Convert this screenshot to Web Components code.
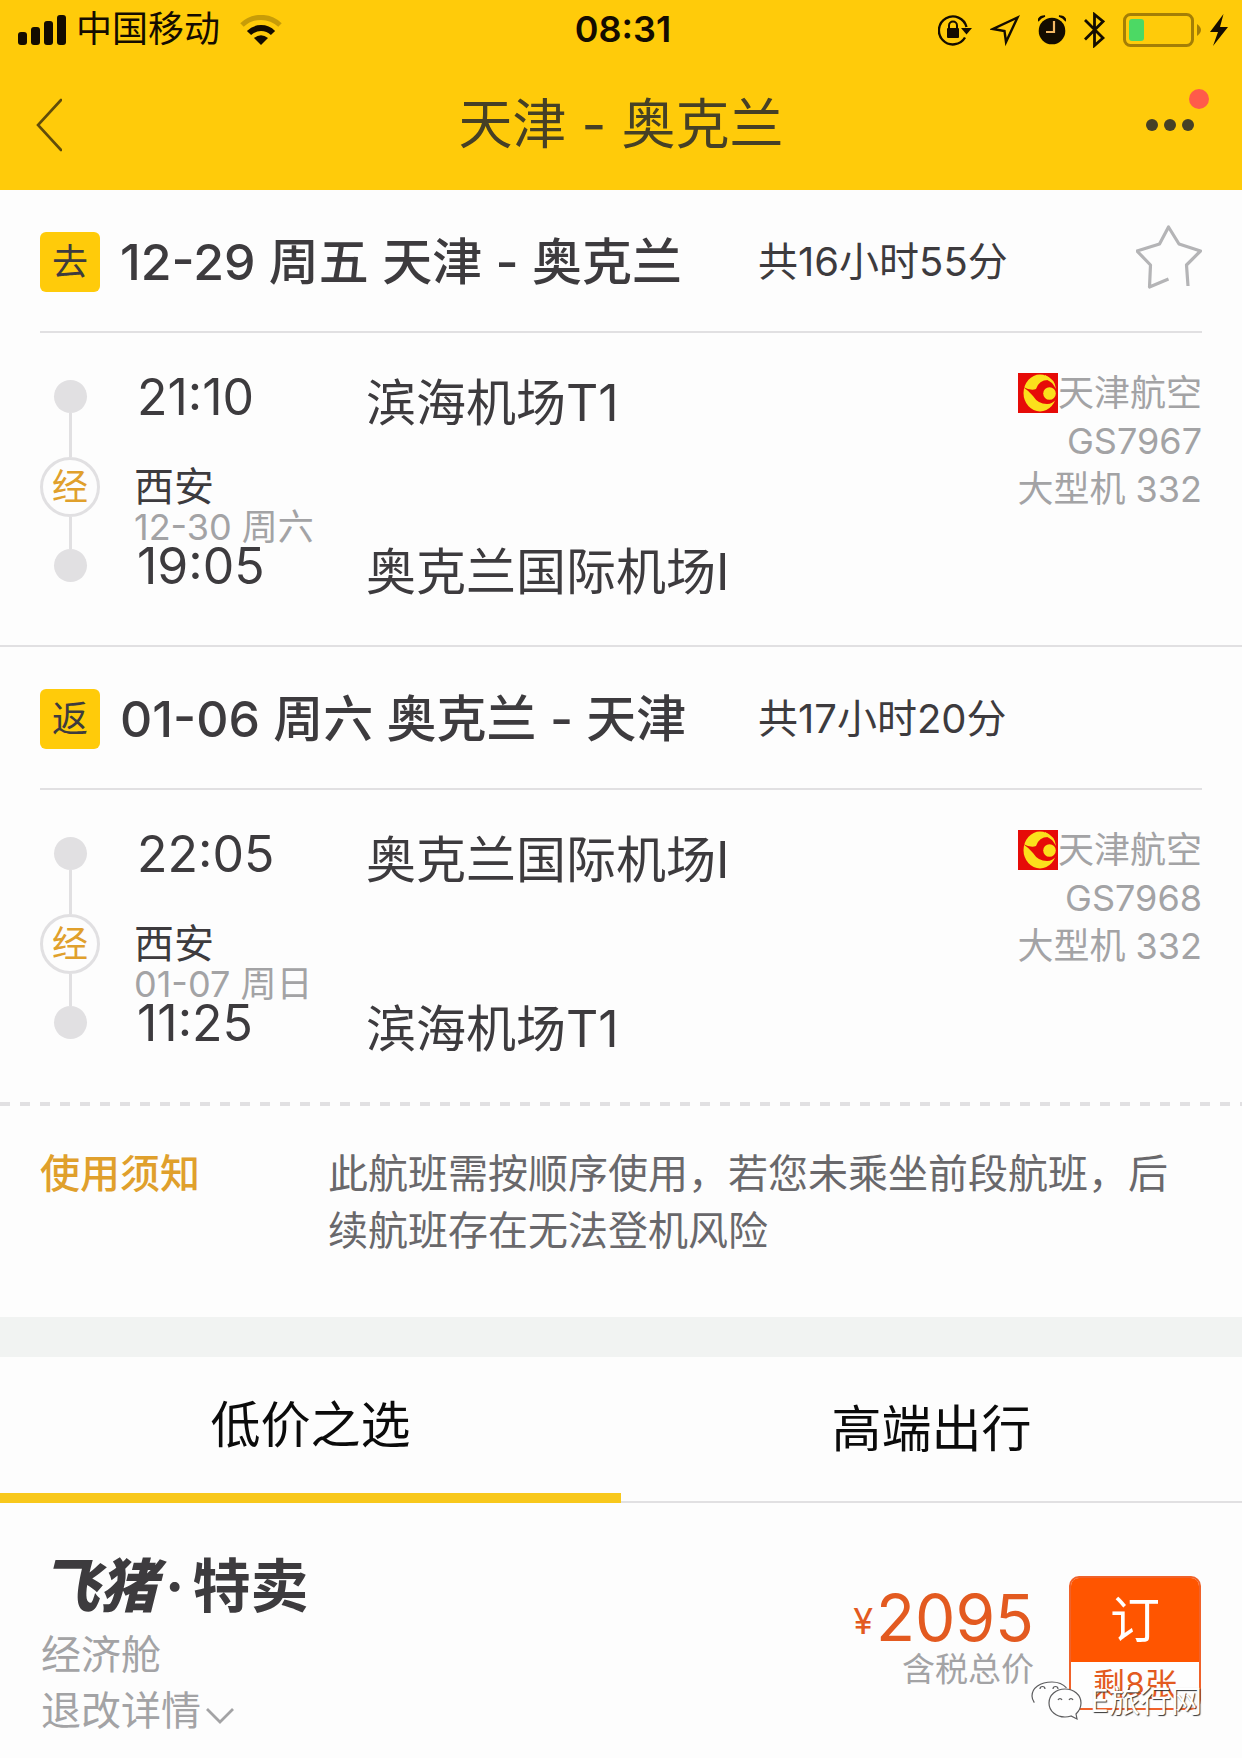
<!DOCTYPE html>
<html lang="zh-CN">
<head>
<meta charset="utf-8">
<meta name="viewport" content="width=device-width, initial-scale=1">
<title>天津 - 奥克兰</title>
<style>
    body {
        margin: 0;
        background: #fdfdfd;
        color: #3d3b3e;
        font-family: Inter, "Noto Sans CJK SC", sans-serif;
        font-size: 40px;
        line-height: 1.2;
        --yellow: #ffcb0a;
        --orange: #ff5500;
        --amber: #e0a02c;
        --grey: #a3a3a5;
        --line: #e1e0e2;
    }
</style>
</head>
<body>
<flight-page>
    <app-header heading="天津 - 奥克兰" carrier="中国移动" clock="08:31"></app-header>
    <flight-leg tag="去" heading="12-29 周五 天津 - 奥克兰" duration="共16小时55分"
        depart="21:10" from="滨海机场T1" via="西安" via-date="12-30 周六"
        arrive="19:05" to="奥克兰国际机场I" airline="天津航空" flight="GS7967" plane="大型机 332" starred></flight-leg>
    <flight-leg tag="返" heading="01-06 周六 奥克兰 - 天津" duration="共17小时20分"
        depart="22:05" from="奥克兰国际机场I" via="西安" via-date="01-07 周日"
        arrive="11:25" to="滨海机场T1" airline="天津航空" flight="GS7968" plane="大型机 332"></flight-leg>
    <usage-notice heading="使用须知">此航班需按顺序使用，若您未乘坐前段航班，后续航班存在无法登机风险</usage-notice>
    <tab-bar first="低价之选" second="高端出行"></tab-bar>
    <fare-offer price="2095" left="剩8张">
        <span slot="cabin">经济舱</span>
        <span slot="rules">退改详情</span>
        <span slot="tax">含税总价</span>
    </fare-offer>
</flight-page>

<script>
const ICONS = {
    signal: [48, 30, `<rect y="17" width="9" height="13" rx="3"/><rect x="13" y="12" width="9" height="18" rx="3"/>
        <rect x="26" y="6" width="9" height="24" rx="3"/><rect x="39" width="9" height="30" rx="3"/>`],
    wifi: [42, 30, `<path d="M2 10A27.500 27.500 0 0 1 40 10" fill="none" stroke="#c79c08" stroke-width="5"/>
        <path d="M9 18A17 17 0 0 1 33 18" fill="none" stroke="currentColor" stroke-width="6"/>
        <path d="M14 23Q21 17.500 28 23L21 30Z"/>`],
    lock: [34, 34, `<path d="M27 24.500A14 14 0 1 1 28.500 14" fill="none" stroke="currentColor" stroke-width="2.400"/>
        <path d="M23 15H34L28.500 21.500Z"/><rect x="9" y="15" width="12" height="10" rx="1"/>
        <path d="M11 16V12.500a4 4 0 0 1 8 0V16" fill="none" stroke="currentColor" stroke-width="2"/>`],
    locate: [30, 34, `<path d="M27.500 4.500L16 29L14.500 18L3 16Z" fill="none" stroke="currentColor" stroke-width="2.400"/>`],
    alarm: [28, 34, `<circle cx="14" cy="18" r="13.300"/><path d="M0 8Q1 3 7 3Q3 4 0 8ZM28 8Q27 3 21 3Q25 4 28 8Z" stroke="currentColor" stroke-width="1.500"/>
        <path d="M16 8V19H8" fill="none" stroke="#f3b765" stroke-width="2.200"/>`],
    bluetooth: [21, 36, `<path d="M1 8L19 26L10.500 33.500V2.500L19 9.500L1 27.500" fill="none" stroke="currentColor" stroke-width="2.800"/>`],
    battery: [78, 34, `<rect x="1.500" y="1.500" width="68" height="31" rx="6" fill="none" stroke="#a47e06" stroke-width="3"/>
        <rect x="6" y="6" width="15" height="22" rx="3" fill="#4cd964"/><path d="M74 11Q78 14 78 17T74 23Z" fill="#a47e06"/>`],
    bolt: [18, 34, `<path d="M13.500 1L0 19H8L3 33L18 14H10Z"/>`],
    back: [26, 54, `<path d="M25 2L2 27L25 52" fill="none" stroke="#614c0a" stroke-width="2.600" stroke-linecap="round"/>`],
    more: [48, 12, `<circle cx="6" cy="6" r="6"/><circle cx="24" cy="6" r="6"/><circle cx="42" cy="6" r="6"/>`],
    star: [66, 76, `<path d="M32.500 55L13.500 63L14.500 41L1 27L23.500 20L32.500 3L43 20L64.500 27L50.500 41L52 62"
        fill="none" stroke="#b4b4b6" stroke-width="3.200" stroke-linejoin="round"/>`],
    airline: [40, 40, `<rect width="40" height="40" fill="#e60b08"/><ellipse cx="22" cy="20" rx="16.500" ry="18.500" fill="#fbe01c"/>
        <path d="M5 14Q13 18 18 16Q21 7 30 7Q36 9 39 15V25Q35 31 29 31Q20 31 15 23Q11 18 5 14Z" fill="#e60b08"/>
        <path d="M27 2Q37 6 38 16Q34 8 27 6Z" fill="#fbe01c"/><circle cx="31.500" cy="20.500" r="6.300" fill="#fbe01c"/>`],
    chevron: [28, 16, `<path d="M1 1L14 14L27 1" fill="none" stroke="currentColor" stroke-width="2.800"/>`],
    bubbles: [52, 42, `<g fill="#fefefe" stroke="#5c5c5e" stroke-width="1.200">
        <path d="M21 2C9 2 1 8 1 16C1 20 4 25 9 27L6 31L14 28Q22 30 29 27C36 24 40 18 38 12C35 5 28 2 21 2Z" stroke-dasharray="34 60 40"/>
        <path d="M34 9C25 9 18 15 18 23S25 37 34 37Q37 37 40 36L46 39L45 34Q50 29 50 23C50 15 43 9 34 9Z"/></g>
        <path d="M9 9a2.500 2.500 0 0 1 5 0M22 9a2.500 2.500 0 0 1 5 0M27 20a2.200 2.200 0 0 1 4 0M38 20a2.200 2.200 0 0 1 4 0" fill="none" stroke="#5c5c5e" stroke-width="1.200"/>`],
};

class UiIcon extends HTMLElement {
    connectedCallback() {
        const [w, h, shape] = ICONS[this.getAttribute('name')];
        this.attachShadow({ mode: 'open' }).innerHTML = `
            <style>
                :host { display: block; flex: none; }
                svg { display: block; }
            </style>
            <svg width="${w}" height="${h}" viewBox="0 0 ${w} ${h}" fill="currentColor" aria-hidden="true">${shape}</svg>
        `;
    }
}

class FlightPage extends HTMLElement {
    constructor() {
        super();
        this.attachShadow({ mode: 'open' }).innerHTML = `
            <style>
                :host { display: block; min-height: 100vh; }
            </style>
            <main><slot></slot></main>
        `;
    }
}

class AppHeader extends HTMLElement {
    connectedCallback() {
        this.attachShadow({ mode: 'open' }).innerHTML = `
            <style>
                :host { display: block; background: var(--yellow); }
                .status, .nav {
                    display: grid;
                    grid-template-columns: 1fr auto 1fr;
                    align-items: center;
                }
                .status {
                    height: 60px;
                    padding: 0 14px 0 18px;
                    color: #140c00;
                    font-size: 36px;
                }
                .carrier, .icons { display: flex; align-items: center; }
                .carrier { gap: 10px; }
                .carrier span { margin-right: 10px; }
                .icons { justify-content: flex-end; gap: 18px; }
                .battery { display: flex; align-items: center; gap: 9px; }
                .clock { font-weight: 600; }
                .nav {
                    height: 130px;
                    padding: 0 36px;
                    color: #464026;
                }
                h1 { margin: 0; font-size: 54px; font-weight: 400; }
                button {
                    position: relative;
                    padding: 0;
                    border: 0;
                    background: none;
                    color: inherit;
                    cursor: pointer;
                }
                button:first-child { justify-self: start; }
                .more { justify-self: end; margin-right: 12px; }
                .badge {
                    position: absolute;
                    top: -30px;
                    right: -15px;
                    width: 20px;
                    height: 20px;
                    border-radius: 50%;
                    background: #ff5b4a;
                }
            </style>
            <div class="status">
                <div class="carrier">
                    <ui-icon name="signal"></ui-icon>
                    <span>${this.getAttribute('carrier')}</span>
                    <ui-icon name="wifi"></ui-icon>
                </div>
                <div class="clock">${this.getAttribute('clock')}</div>
                <div class="icons">
                    <ui-icon name="lock"></ui-icon>
                    <ui-icon name="locate"></ui-icon>
                    <ui-icon name="alarm"></ui-icon>
                    <ui-icon name="bluetooth"></ui-icon>
                    <div class="battery">
                        <ui-icon name="battery"></ui-icon>
                        <ui-icon name="bolt"></ui-icon>
                    </div>
                </div>
            </div>
            <div class="nav">
                <button aria-label="返回"><ui-icon name="back"></ui-icon></button>
                <h1>${this.getAttribute('heading')}</h1>
                <button class="more" aria-label="更多"><ui-icon name="more"></ui-icon><span class="badge"></span></button>
            </div>
        `;
    }
}

class FlightLeg extends HTMLElement {
    connectedCallback() {
        const get = name => this.getAttribute(name);
        const star = this.hasAttribute('starred')
            ? '<button aria-label="收藏"><ui-icon name="star"></ui-icon></button>' : '';
        this.attachShadow({ mode: 'open' }).innerHTML = `
            <style>
                :host { display: block; border-bottom: 2px solid var(--line); }
                :host(:not([starred])) { border-bottom: 0; }
                header {
                    display: grid;
                    grid-template-columns: 60px 658px 1fr auto;
                    align-items: center;
                    min-height: 76px;
                    margin: 0 40px;
                    padding: 34px 0 31px;
                    border-bottom: 2px solid var(--line);
                }
                .tag {
                    border-radius: 6px;
                    background: var(--yellow);
                    font-size: 36px;
                    line-height: 60px;
                    text-align: center;
                }
                h2 {
                    margin: 0 0 0 20px;
                    font-size: 50px;
                    font-weight: 500;
                    line-height: 60px;
                    white-space: nowrap;
                }
                button { padding: 0; border: 0; background: none; cursor: pointer; }
                .body {
                    display: grid;
                    grid-template-columns: 60px 1fr auto;
                    column-gap: 34px;
                    padding: 36px 40px 48px;
                }
                .rail {
                    display: flex;
                    flex-direction: column;
                    align-items: center;
                    padding-top: 11px;
                }
                .dot { width: 33px; height: 33px; border-radius: 50%; background: var(--line); }
                .bar { width: 3px; height: 44px; background: var(--line); }
                .bar.short { height: 32px; }
                .ring {
                    box-sizing: border-box;
                    width: 60px;
                    height: 60px;
                    border: 3px solid var(--line);
                    border-radius: 50%;
                    color: var(--amber);
                    font-size: 36px;
                    line-height: 54px;
                    text-align: center;
                }
                .stops { padding-top: 9px; }
                .stop {
                    display: grid;
                    grid-template-columns: 232px 1fr;
                    font-size: 50px;
                    line-height: 50px;
                }
                time { padding-left: 3px; line-height: 38px; }
                .via { margin-top: 39px; line-height: 40px; }
                .date { color: var(--grey); font-size: 36px; }
                .plane {
                    color: var(--grey);
                    font-size: 36px;
                    line-height: 48px;
                    text-align: right;
                }
                .airline { display: flex; align-items: center; justify-content: flex-end; }
            </style>
            <header>
                <div class="tag">${get('tag')}</div>
                <h2>${get('heading')}</h2>
                <div>${get('duration')}</div>
                ${star}
            </header>
            <div class="body">
                <div class="rail">
                    <div class="dot"></div>
                    <div class="bar"></div>
                    <div class="ring">经</div>
                    <div class="bar short"></div>
                    <div class="dot"></div>
                </div>
                <div class="stops">
                    <div class="stop"><time>${get('depart')}</time><span>${get('from')}</span></div>
                    <div class="via">${get('via')}<div class="date">${get('via-date')}</div></div>
                    <div class="stop"><time>${get('arrive')}</time><span>${get('to')}</span></div>
                </div>
                <div class="plane">
                    <div class="airline"><ui-icon name="airline"></ui-icon>${get('airline')}</div>
                    <div>${get('flight')}</div>
                    <div>${get('plane')}</div>
                </div>
            </div>
        `;
    }
}

class UsageNotice extends HTMLElement {
    connectedCallback() {
        this.attachShadow({ mode: 'open' }).innerHTML = `
            <style>
                :host {
                    display: block;
                    border-bottom: 40px solid #f1f3f2;
                    line-height: 57px;
                }
                .dashes {
                    height: 4px;
                    background: repeating-linear-gradient(90deg, var(--line) 0 10px, transparent 10px 20px);
                }
                section {
                    display: grid;
                    grid-template-columns: 288px 1fr;
                    padding: 39px 40px 58px;
                }
                h3 { margin: 0; color: var(--amber); font-size: 40px; font-weight: 500; }
                p { margin: 0; color: #69686b; }
            </style>
            <div class="dashes"></div>
            <section>
                <h3>${this.getAttribute('heading')}</h3>
                <p><slot></slot></p>
            </section>
        `;
    }
}

class TabBar extends HTMLElement {
    connectedCallback() {
        this.attachShadow({ mode: 'open' }).innerHTML = `
            <style>
                :host { display: block; }
                .tabs { display: grid; grid-template-columns: 1fr 1fr; }
                button {
                    height: 146px;
                    padding: 0;
                    border: 0;
                    border-bottom: 2px solid var(--line);
                    background: none;
                    color: #0b0b0b;
                    font: inherit;
                    font-size: 50px;
                    cursor: pointer;
                }
                button[aria-selected="true"] { border-bottom: 10px solid #f8c81c; }
            </style>
            <div class="tabs" role="tablist">
                <button role="tab" aria-selected="true">${this.getAttribute('first')}</button>
                <button role="tab" aria-selected="false">${this.getAttribute('second')}</button>
            </div>
        `;
        const tabs = this.shadowRoot.querySelectorAll('button');
        tabs.forEach(tab => tab.addEventListener('click', () => {
            tabs.forEach(t => t.setAttribute('aria-selected', t === tab));
        }));
    }
}

class FareOffer extends HTMLElement {
    connectedCallback() {
        this.attachShadow({ mode: 'open' }).innerHTML = `
            <style>
                :host {
                    position: relative;
                    display: flex;
                    justify-content: space-between;
                    padding: 55px 41px 16px;
                    color: var(--grey);
                    line-height: 56px;
                }
                h3 {
                    display: flex;
                    gap: 8px;
                    margin: 0 0 13px;
                    color: #3d3b3e;
                    font-size: 58px;
                    font-weight: 700;
                }
                .brand { font-style: italic; font-weight: 900; }
                a { display: flex; align-items: center; gap: 5px; color: inherit; text-decoration: none; }
                a ui-icon { margin-top: 10px; }
                .buy { display: flex; align-items: flex-start; gap: 35px; padding-top: 18px; }
                .cost { padding-top: 9px; text-align: right; }
                .price {
                    display: flex;
                    align-items: center;
                    justify-content: flex-end;
                    gap: 3px;
                    color: #e35a20;
                    font-size: 64px;
                    line-height: 66px;
                }
                .price small { padding-top: 6px; font-size: 36px; line-height: 60px; }
                .tax { font-size: 33px; line-height: 36px; }
                button {
                    width: 132px;
                    padding: 0;
                    overflow: hidden;
                    border: 2px solid #f0622a;
                    border-radius: 10px;
                    background: #fefefe;
                    color: #e35a20;
                    font: inherit;
                    cursor: pointer;
                }
                button span { display: block; }
                .book { background: var(--orange); color: #fff; font-size: 50px; line-height: 84px; }
                .left { font-size: 32px; line-height: 46px; }
                .mark {
                    position: absolute;
                    right: 40px;
                    bottom: 32px;
                    display: flex;
                    align-items: center;
                    gap: 7px;
                    color: #fff;
                    font-size: 31px;
                    line-height: 44px;
                    text-shadow: 1px 1px 1px #333;
                    pointer-events: none;
                }
            </style>
            <div>
                <h3><span class="brand">飞猪</span><span>·</span><span>特卖</span></h3>
                <div><slot name="cabin"></slot></div>
                <a href="#rules"><slot name="rules"></slot><ui-icon name="chevron"></ui-icon></a>
            </div>
            <div class="buy">
                <div class="cost">
                    <div class="price"><small>¥</small>${this.getAttribute('price')}</div>
                    <div class="tax"><slot name="tax"></slot></div>
                </div>
                <button><span class="book">订</span><span class="left">${this.getAttribute('left')}</span></button>
            </div>
            <div class="mark"><ui-icon name="bubbles"></ui-icon>E旅行网</div>
        `;
    }
}

customElements.define('ui-icon', UiIcon);
customElements.define('flight-page', FlightPage);
customElements.define('app-header', AppHeader);
customElements.define('flight-leg', FlightLeg);
customElements.define('usage-notice', UsageNotice);
customElements.define('tab-bar', TabBar);
customElements.define('fare-offer', FareOffer);
</script>
</body>
</html>
